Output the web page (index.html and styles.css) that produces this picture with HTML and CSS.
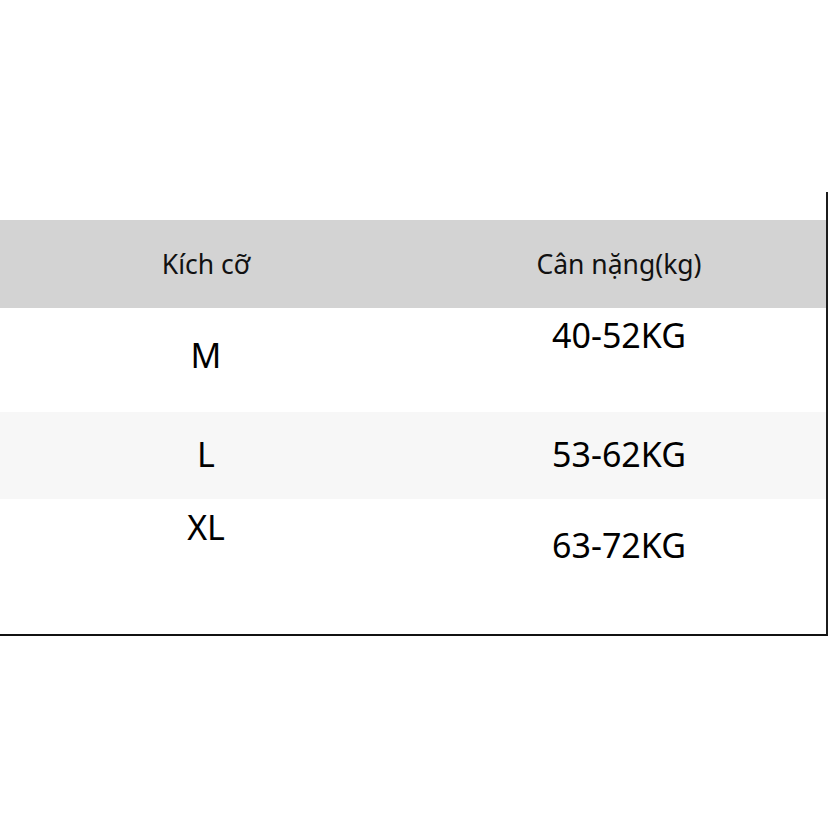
FILE: index.html
```html
<!DOCTYPE html>
<html lang="vi">
<head>
<meta charset="utf-8">
<title>Bảng kích cỡ</title>
<link rel="stylesheet" href="styles.css">
</head>
<body>
<div class="page">
  <div class="table">
    <div class="spacer"></div>
    <div class="row head">
      <div class="cell c1"><span class="txt">Kích cỡ</span></div>
      <div class="cell c2"><span class="txt">Cân nặng(kg)</span></div>
    </div>
    <div class="row r-m">
      <div class="cell c1"><span class="txt">M</span></div>
      <div class="cell c2"><span class="txt">40-52KG</span></div>
    </div>
    <div class="row r-l">
      <div class="cell c1"><span class="txt">L</span></div>
      <div class="cell c2"><span class="txt">53-62KG</span></div>
    </div>
    <div class="row r-xl">
      <div class="cell c1"><span class="txt">XL</span></div>
      <div class="cell c2"><span class="txt">63-72KG</span></div>
    </div>
  </div>
</div>
</body>
</html>
```

FILE: styles.css
```css
html, body {
  margin: 0;
  padding: 0;
  background: #ffffff;
}
body {
  width: 828px;
  height: 828px;
  overflow: hidden;
  font-family: "Noto Sans", "Open Sans", sans-serif;
  color: #000000;
}
.page {
  padding-top: 192px;
}
.table {
  width: 828px;
  box-sizing: border-box;
  border-right: 2px solid #1c1c1c;
  border-bottom: 2px solid #111111;
  display: flex;
  flex-direction: column;
}
.spacer {
  height: 28px;
}
.row {
  display: grid;
  grid-template-columns: 412px 414px;
}
.cell {
  display: flex;
  justify-content: center;
  align-items: flex-start;
  line-height: 40px;
  font-size: 34px;
}
.txt {
  display: inline-block;
}
.head {
  height: 88px;
  background: #d3d3d3;
}
.head .cell {
  font-size: 26.5px;
  line-height: 30px;
  align-items: center;
  color: #111111;
}
.r-m {
  height: 104px;
}
.r-m .c1 { padding-top: 27px; }
.r-m .c2 { padding-top: 7px; }
.r-l {
  height: 87px;
  background: #f7f7f7;
}
.r-l .c1, .r-l .c2 { padding-top: 22px; }
.r-xl {
  height: 135px;
}
.r-xl .c1 { padding-top: 8px; }
.r-xl .c2 { padding-top: 26px; }
```
